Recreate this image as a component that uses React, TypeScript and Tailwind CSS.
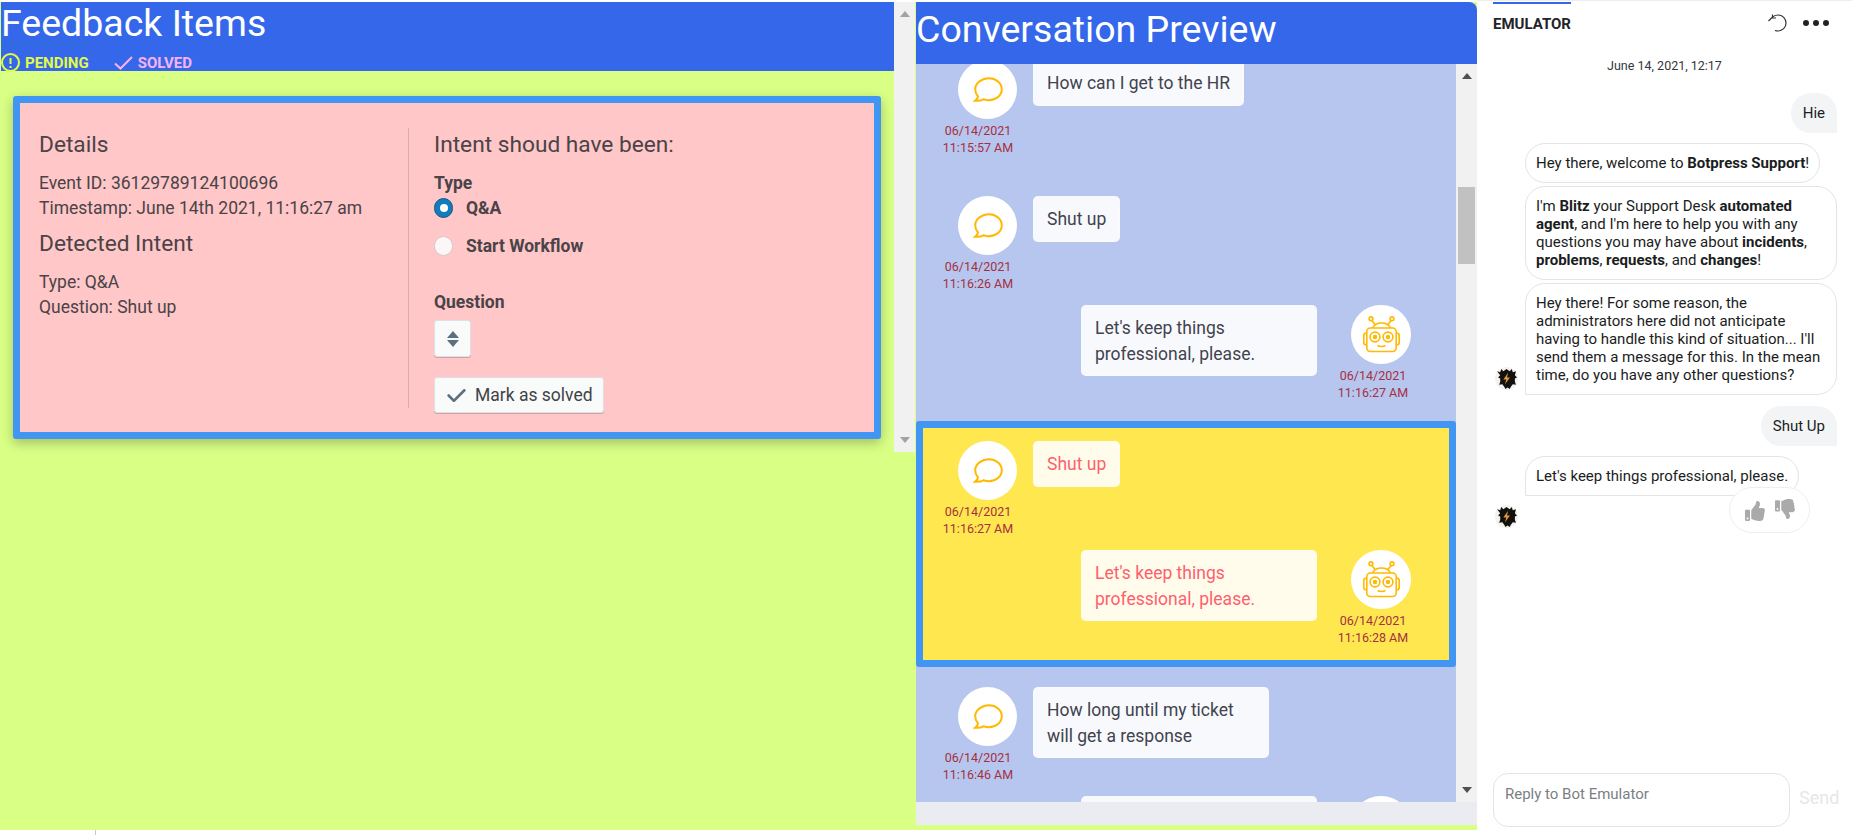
import { FaThumbsDown, FaThumbsUp } from "react-icons/fa";

const TICK = "M14 3c-.28 0-.53.11-.71.29L6 10.59l-3.29-3.3a1.003 1.003 0 00-1.42 1.42l4 4c.18.18.43.29.71.29s.53-.11.71-.29l8-8A1.003 1.003 0 0014 3z";

const Arrow = ({ down, color, big }: { down?: boolean; color: string; big?: boolean }) => (
    <svg width={big ? 12 : 10} height={big ? 7 : 6} viewBox="0 0 10 6" preserveAspectRatio="none" className={color}>
        <polygon points={down ? "0,0 10,0 5,6" : "0,6 10,6 5,0"} fill="currentColor" />
    </svg>
);

const ChatIcon = () => (
    <svg width="30" height="26" viewBox="0 0 30 26" fill="none" stroke="#ffb900" strokeWidth="2">
        <path d="M16 1.2c7 0 12.8 4.900 12.800 11s-5.800 11-12.800 11c-2 0-3.800-.4-5.400-1-1.800 1.300-5 1.800-8.600 1.600 1.500-1 2.700-2.700 3-4.300C3.300 17.500 2.200 15 2.200 12.200c0-6.100 6.800-11 13.800-11z" />
    </svg>
);

const RobotIcon = () => (
    <svg width="37" height="37" viewBox="0 0 37 37" fill="none" stroke="#ffb900" strokeWidth="1.600">
        <circle cx="8" cy="2.800" r="1.900" />
        <circle cx="29" cy="2.800" r="1.900" />
        <path d="M9 4.500l3 4M28 4.500l-3 4" />
        <path d="M9.500 12c1.500-3 5-5 9-5s7.500 2 9 5" />
        <rect x="3.800" y="12" width="29.400" height="23.500" rx="3.500" />
        <path d="M3.800 17C1.800 17 .8 18 .8 19.500v7C.8 28 1.800 29 3.800 29M33.200 17c2 0 3 1 3 2.500v7c0 1.500-1 2.500-3 2.500" />
        <circle cx="12" cy="21" r="4.900" />
        <circle cx="25" cy="21" r="4.900" />
        <circle cx="12" cy="21" r="1.400" fill="#ffb900" />
        <circle cx="25" cy="21" r="1.400" fill="#ffb900" />
        <path d="M14.500 29.500c2.500 1.200 5.500 1.200 8 0" />
    </svg>
);

const BotLogo = () => (
    <div className="flex h-[23px] w-[23px] shrink-0 items-center justify-center rounded-full bg-[#f2f2f2]">
        <svg width="21" height="21" viewBox="0 0 20 20">
            <path d="M1 3l3 1 1-3 2 2 3-2 3 2 2-2 1 3 3-1-1 4 2 2-2 1 0 3 1 3-3-.5-2 2.500-1 2-2-1.500-2 1.500-1-2-2-2.500-3 .5 1-3 0-3-2-1 2-2z" fill="#14110d" />
            <path d="M11.500 4.500L7 11h2.800L8.500 15.500 13.300 9h-2.800z" fill="#d99a45" />
        </svg>
    </div>
);

const Stamp = ({ date, time }: { date: string; time: string }) => (
    <div className="mt-[3px] text-center text-[12.500px] leading-[17px] text-[#a5303f]">
        <div>{date}</div>
        <div>{time}</div>
    </div>
);

const Row = ({ from, text, time, hot, mb, wide }: { from: "user" | "bot"; text: string[]; time: string; hot?: boolean; mb: string; wide?: boolean }) => {
    const bubble = (
        <div className={`h-fit rounded-[5px] border border-white/40 px-[13px] pt-[10px] pb-[8px] text-[17.500px] leading-[25.500px] ${hot ? "bg-[#fffcec] text-[#ff5f6d]" : "bg-[#f8f9fd] text-[#41434d]"}`}>
            {text.map((line) => (
                <div key={line} className="whitespace-nowrap">{line}</div>
            ))}
        </div>
    );
    if (from === "user") {
        return (
            <div className={`flex pl-[17px] ${mb}`}>
                <div className="w-[90px]">
                    <div className="ml-[25px] flex h-[59px] w-[59px] items-center justify-center rounded-full bg-white">
                        <ChatIcon />
                    </div>
                    <Stamp date="06/14/2021" time={time} />
                </div>
                <div className={`ml-[10px] ${wide ? "w-[236px]" : ""}`}>{bubble}</div>
            </div>
        );
    }
    return (
        <div className={`flex justify-end pr-[38px] ${mb}`}>
            <div className="w-[236px]">{bubble}</div>
            <div className="ml-[11px] w-[90px]">
                <div className="ml-[23px] flex h-[59px] w-[60px] items-center justify-center rounded-full bg-white">
                    <RobotIcon />
                </div>
                <Stamp date="06/14/2021" time={time} />
            </div>
        </div>
    );
};

const Bubble = ({ children, square }: { children: React.ReactNode; square?: boolean }) => (
    <div className={`w-fit rounded-[20px] border border-[#e2e4e7] px-[10px] py-[10px] text-[15px] leading-[18px] text-[#1a1d21] ${square ? "rounded-bl-none" : ""}`}>
        {children}
    </div>
);

const Mine = ({ children }: { children: React.ReactNode }) => (
    <div className="w-fit self-end rounded-[20px] rounded-br-none bg-[#f3f4f6] px-[12px] py-[11px] text-[15px] leading-[18px] text-[#1a1d21]">
        {children}
    </div>
);

export default function App() {
    return (
        <div className="flex h-[835px] w-full overflow-hidden bg-white font-[family-name:Roboto,sans-serif]">
            <div className="flex w-[1477px] shrink-0 flex-col pt-[2px]">
                <div className="flex h-[828px] bg-[#d9ff85]">
                    {/* Feedback list */}
                    <div className="flex h-[450px] w-[916px] shrink-0">
                        <div className="w-[894px] shrink-0">
                            <div className="ml-px h-[69px] bg-[#3567ea] text-white">
                                <h1 className="h-[41px] text-[37.500px] leading-[42px] whitespace-nowrap">Feedback Items</h1>
                                <div className="h-[2px] w-[87px] bg-[#2b6fd6]" />
                                <div className="flex items-center pt-[8px] text-[15px] leading-[18px] font-bold">
                                    <div className="flex items-center text-[#e3fb44]">
                                        <svg width="19" height="19" viewBox="0 0 19 19" fill="none" stroke="currentColor" strokeWidth="2">
                                            <circle cx="9.500" cy="9.500" r="8.500" />
                                            <path d="M9.500 5v6M9.500 13v2" />
                                        </svg>
                                        <span className="ml-[5px]">PENDING</span>
                                    </div>
                                    <div className="ml-[25px] flex items-center text-[#f8b2f5]">
                                        <svg width="19" height="14" viewBox="0 0 19 14" fill="none" stroke="currentColor" strokeWidth="2">
                                            <path d="M1 7.500l5.500 5L18 1" />
                                        </svg>
                                        <span className="ml-[5px]">SOLVED</span>
                                    </div>
                                </div>
                            </div>
                            <div className="pt-[25px] pl-[13px]">
                                <div className="flex h-[343px] w-[868px] rounded-[3px] border-[7px] border-[#4096f2] bg-[#ffc7c7] pt-[25px] pl-[19px] text-[17.500px] leading-[25px] text-[#4a4347] shadow-[0_4px_12px_rgba(0,0,0,0.25)]">
                                    <div className="h-[280px] w-[370px] border-r border-[#d9aeb0]">
                                        <h3 className="text-[22.700px] leading-[34px]">Details</h3>
                                        <p className="mt-[9px]">Event ID: 36129789124100696</p>
                                        <p>Timestamp: June 14th 2021, 11:16:27 am</p>
                                        <h3 className="mt-[6px] text-[22.700px] leading-[34px]">Detected Intent</h3>
                                        <p className="mt-[9px]">Type: Q&amp;A</p>
                                        <p>Question: Shut up</p>
                                    </div>
                                    <div className="pl-[25px]">
                                        <h3 className="text-[22.700px] leading-[34px]">Intent shoud have been:</h3>
                                        <p className="mt-[9px] font-bold">Type</p>
                                        <label className="mt-[2px] flex h-[20px] items-center font-bold">
                                            <span className="flex h-[20px] w-[19px] items-center justify-center rounded-full border border-[#0e5a8a] bg-[#137cbd]">
                                                <span className="h-[8px] w-[8px] rounded-full bg-white" />
                                            </span>
                                            <span className="ml-[13px]">Q&amp;A</span>
                                        </label>
                                        <label className="mt-[18px] flex h-[20px] items-center font-bold">
                                            <span className="h-[20px] w-[19px] rounded-full border border-[#dcc5c7] bg-[#fbf7f7]" />
                                            <span className="ml-[13px]">Start Workflow</span>
                                        </label>
                                        <p className="mt-[34px] font-bold">Question</p>
                                        <button className="mt-[5px] flex h-[37px] w-[37px] flex-col items-center justify-center gap-[2px] rounded-[3px] border border-[#dfe0e3] bg-[#f9fafa] shadow-[0_1px_0_rgba(16,22,26,0.2)]">
                                            <Arrow big color="text-[#5c7080]" />
                                            <Arrow big down color="text-[#5c7080]" />
                                        </button>
                                        <button className="mt-[20px] flex h-[36px] w-[170px] items-center rounded-[3px] border border-[#dfe0e3] bg-[#f9fafa] pl-[11px] text-[#3f4347] shadow-[0_1px_0_rgba(16,22,26,0.2)]">
                                            <svg width="21" height="21" viewBox="0 0 16 16" fill="#5c7080"><path d={TICK} /></svg>
                                            <span className="ml-[8px]">Mark as solved</span>
                                        </button>
                                    </div>
                                </div>
                            </div>
                        </div>
                        <div className="flex h-[450px] w-[21px] shrink-0 flex-col items-center justify-between bg-[#f1f1f1] py-[9px]">
                            <Arrow color="text-[#a3a3a3]" />
                            <Arrow down color="text-[#a3a3a3]" />
                        </div>
                    </div>

                    {/* Conversation */}
                    <div className="flex h-[823px] w-[561px] shrink-0 flex-col">
                        <div className="h-[62px] shrink-0 rounded-tr-[8px] bg-[#3567ea] text-[37.500px] leading-[54px] whitespace-nowrap text-white">
                            Conversation Preview
                        </div>
                        <div className="flex min-h-0 flex-1">
                            <div className="w-[540px] overflow-hidden bg-[#b7c6ee]">
                                <div className="-mt-[4px]">
                                    <Row from="user" text={["How can I get to the HR"]} time="11:15:57 AM" mb="h-[136px]" />
                                    <Row from="user" text={["Shut up"]} time="11:16:26 AM" mb="h-[109px]" />
                                    <Row from="bot" text={["Let's keep things", "professional, please."]} time="11:16:27 AM" mb="h-[116px]" />
                                    <div className="h-[246px] rounded-[3px] border-[7px] border-[#4096f2] bg-[#ffe74f] pt-[13px]">
                                        <div className="-mx-[7px]">
                                            <Row from="user" text={["Shut up"]} time="11:16:27 AM" hot mb="h-[109px]" />
                                            <Row from="bot" text={["Let's keep things", "professional, please."]} time="11:16:28 AM" hot mb="h-[110px]" />
                                        </div>
                                    </div>
                                    <div className="h-[20px]" />
                                    <Row from="user" text={["How long until my ticket", "will get a response"]} time="11:16:46 AM" mb="h-[109px]" wide />
                                    <Row from="bot" text={["Let's keep things", "professional, please."]} time="11:16:47 AM" mb="h-[109px]" />
                                </div>
                            </div>
                            <div className="relative w-[21px] shrink-0 bg-[#f1f1f1]">
                                <div className="flex h-full flex-col items-center justify-between py-[9px]">
                                    <Arrow color="text-[#505050]" />
                                    <Arrow down color="text-[#505050]" />
                                </div>
                                <div className="absolute top-[123px] left-[2px] h-[77px] w-[17px] bg-[#c1c1c1]" />
                            </div>
                        </div>
                        <div className="h-[23px] shrink-0 bg-[#ebecf1]" />
                    </div>
                </div>
                <div className="h-[5px] pl-[95px]">
                    <div className="h-full w-px bg-[#c8c8c8]" />
                </div>
            </div>

            {/* Emulator */}
            <div className="flex min-w-0 flex-1 flex-col border-t border-[#eeeeee] pt-px">
                <div className="flex h-[44px] shrink-0 pr-[23px] pl-[16px]">
                    <div className="w-[78px] border-t-2 border-[#3567ea] pt-[11px] text-[15px] leading-[18px] font-bold whitespace-nowrap text-[#1f2429]">EMULATOR</div>
                    <div className="ml-auto flex h-[38px] items-center gap-[16px] pt-[4px]">
                        <svg width="20" height="18" viewBox="0 0 20 18" fill="none" stroke="#333" strokeWidth="1.200">
                            <path d="M5 3.500C6.500 2 8.500 1 11 1c4.500 0 8 3.500 8 8s-3.500 8-8 8c-1 0-2-.2-3-.5" />
                            <path d="M5.500 .5v3.500H9M5 3.500L1.500 7" />
                        </svg>
                        <svg width="26" height="6" viewBox="0 0 26 6" fill="#222">
                            <circle cx="3" cy="3" r="3" />
                            <circle cx="13" cy="3" r="3" />
                            <circle cx="23" cy="3" r="3" />
                        </svg>
                    </div>
                </div>
                <div className="h-[47px] shrink-0 pt-[11px] text-center text-[12.500px] leading-[18px] text-[#33373c]">June 14, 2021, 12:17</div>
                <div className="flex flex-col pr-[15px] pl-[18px]">
                    <Mine>Hie</Mine>
                    <div className="mt-[10px] flex items-end">
                        <div className="mb-[5px]"><BotLogo /></div>
                        <div className="ml-[7px] flex flex-col gap-[3px]">
                            <Bubble>Hey there, welcome to <b>Botpress Support</b>!</Bubble>
                            <Bubble>I'm <b>Blitz</b> your Support Desk <b>automated agent</b>, and I'm here to help you with any questions you may have about <b>incidents</b>, <b>problems</b>, <b>requests</b>, and <b>changes</b>!</Bubble>
                            <Bubble square>Hey there! For some reason, the administrators here did not anticipate having to handle this kind of situation... I'll send them a message for this. In the mean time, do you have any other questions?</Bubble>
                        </div>
                    </div>
                    <div className="mt-[11px]"><div className="flex justify-end"><Mine>Shut Up</Mine></div></div>
                    <div className="mt-[10px] flex items-end">
                        <div className="mb-[5px]"><BotLogo /></div>
                        <div className="ml-[7px] flex flex-col">
                            <Bubble square>Let's keep things professional, please.</Bubble>
                            <div className="-mt-[9px] ml-[204px] flex h-[46px] w-[81px] items-center justify-center gap-[10px] rounded-[23px] border border-[#eeeeee] bg-white text-[#aaaaaa]">
                                <FaThumbsUp size={20} className="mt-[2px]" />
                                <FaThumbsDown size={20} className="-mt-[2px]" />
                            </div>
                        </div>
                    </div>
                </div>
                <div className="mt-auto mb-[8px] flex pl-[16px]">
                    <div className="h-[54px] w-[297px] rounded-[15px] border border-[#e2e4e7] px-[11px] py-[11px] text-[15px] leading-[18px] text-[#7b7f85]">Reply to Bot Emulator</div>
                    <div className="ml-[9px] pt-[15px] text-[18px] leading-[20px] text-[#e6e7e9]">Send</div>
                </div>
            </div>
        </div>
    );
}
